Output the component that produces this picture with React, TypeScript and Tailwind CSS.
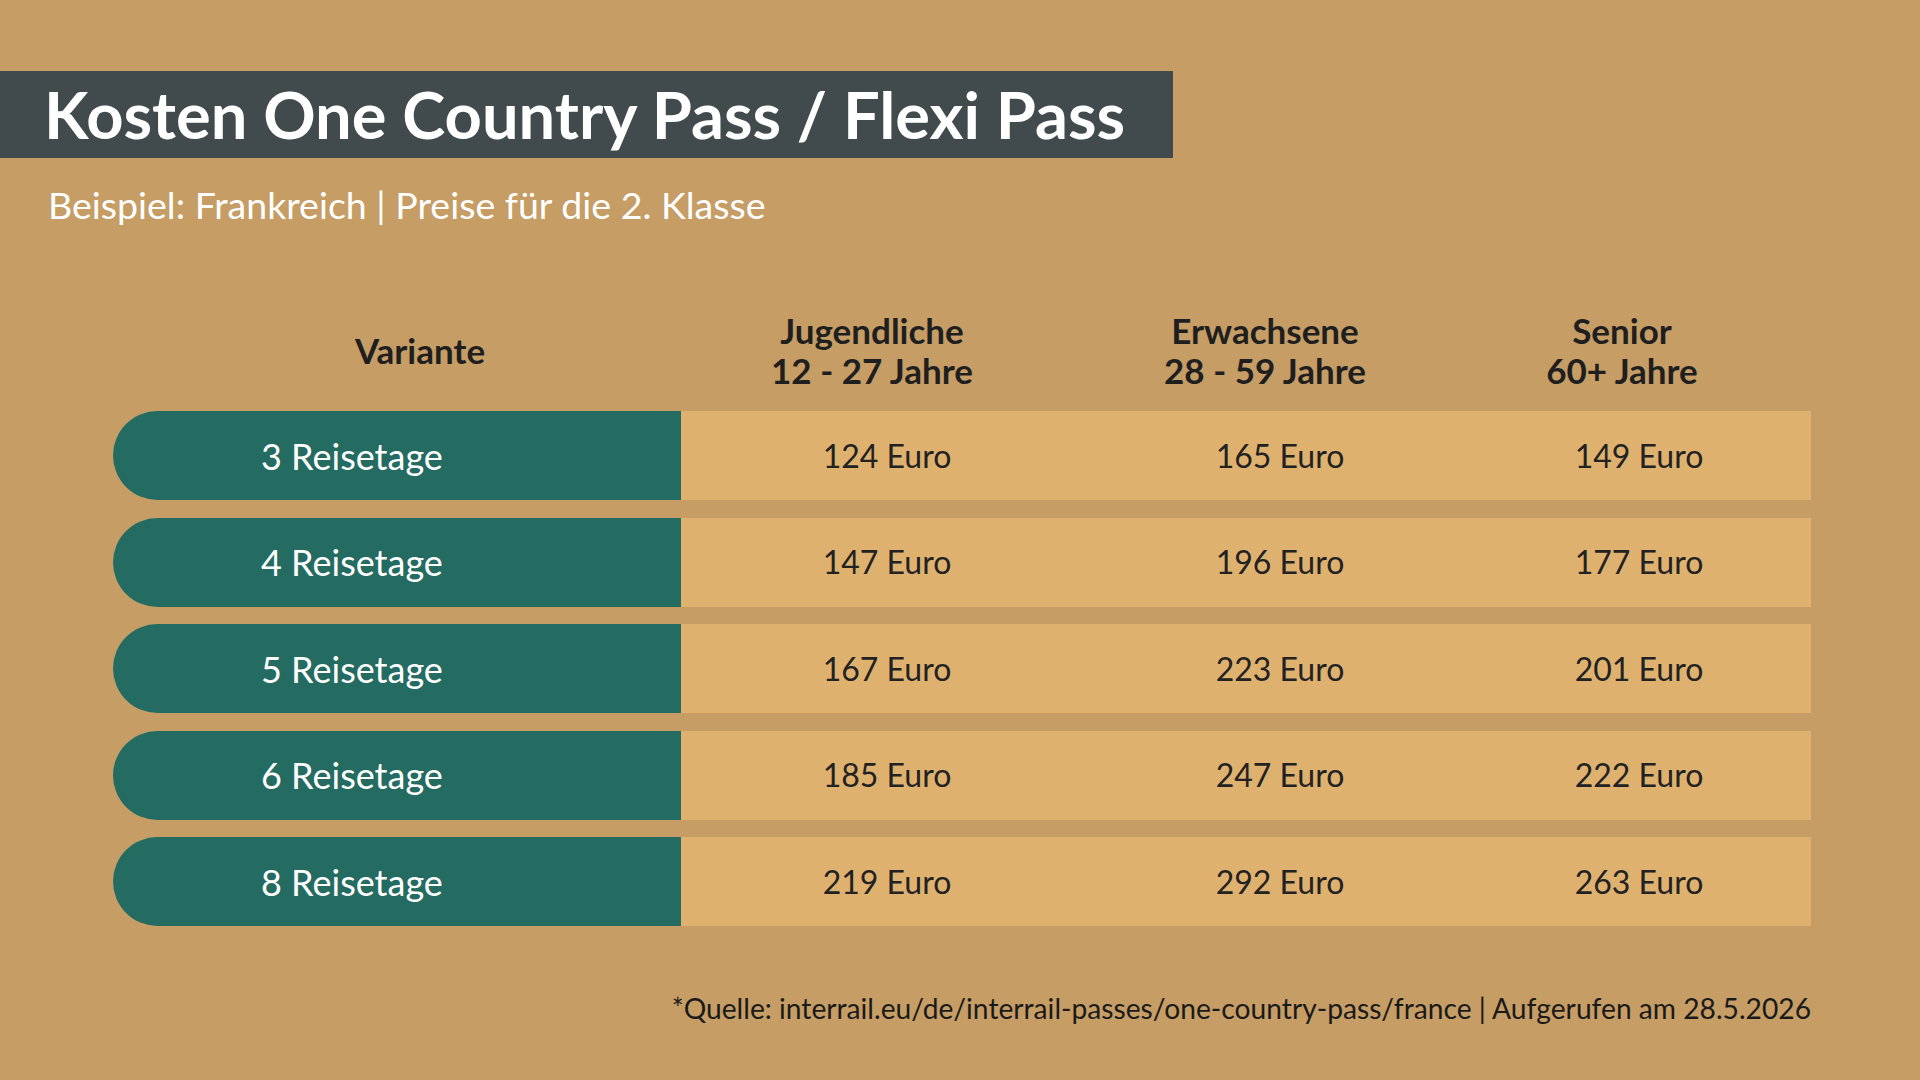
const rows = [
  { label: "3 Reisetage", prices: ["124 Euro", "165 Euro", "149 Euro"] },
  { label: "4 Reisetage", prices: ["147 Euro", "196 Euro", "177 Euro"] },
  { label: "5 Reisetage", prices: ["167 Euro", "223 Euro", "201 Euro"] },
  { label: "6 Reisetage", prices: ["185 Euro", "247 Euro", "222 Euro"] },
  { label: "8 Reisetage", prices: ["219 Euro", "292 Euro", "263 Euro"] },
];

const App = () => {
  return (
    <div className="w-[1920px] h-[1080px] bg-[#c69d64] font-['Lato','Noto_Sans',sans-serif] flex flex-col overflow-hidden">
      <div className="mt-[71px] w-[1173px] h-[87px] bg-[#414a4d] flex items-center pl-[44px]">
        <span className="text-white font-bold text-[65px] leading-none">Kosten One Country Pass / Flexi Pass</span>
      </div>
      <div className="pl-[48px] mt-[27px] text-white text-[37.5px] leading-[40px]">
        Beispiel: Frankreich | Preise für die 2. Klasse
      </div>

      <div className="mt-[85px] ml-[194px] grid grid-cols-[452px_452px_334px_380px] items-center text-[#1f1f1f] font-bold text-[35px] leading-[40px] text-center">
        <div>Variante</div>
        <div>Jugendliche<br />12 - 27 Jahre</div>
        <div>Erwachsene<br />28 - 59 Jahre</div>
        <div>Senior<br />60+ Jahre</div>
      </div>

      <div className="mt-[21px] ml-[113px] flex flex-col gap-[17.5px]">
        {rows.map((r) => (
          <div key={r.label} className="flex h-[89px]">
            <div className="w-[568px] bg-[#246b61] rounded-l-[45px] flex items-center pl-[148px] text-white text-[36px]">
              {r.label}
            </div>
            <div className="w-[1130px] bg-[#dfb16f] grid grid-cols-[412px_374px_344px] items-center text-center text-[#222] text-[32px]">
              {r.prices.map((p) => (
                <div key={p}>{p}</div>
              ))}
            </div>
          </div>
        ))}
      </div>

      <div className="mt-[66px] w-[1811px] text-right text-[#1a1a1a] text-[28.2px] leading-[32px]">
        *Quelle: interrail.eu/de/interrail-passes/one-country-pass/france | Aufgerufen am 28.5.2026
      </div>
    </div>
  );
};

export default App;
